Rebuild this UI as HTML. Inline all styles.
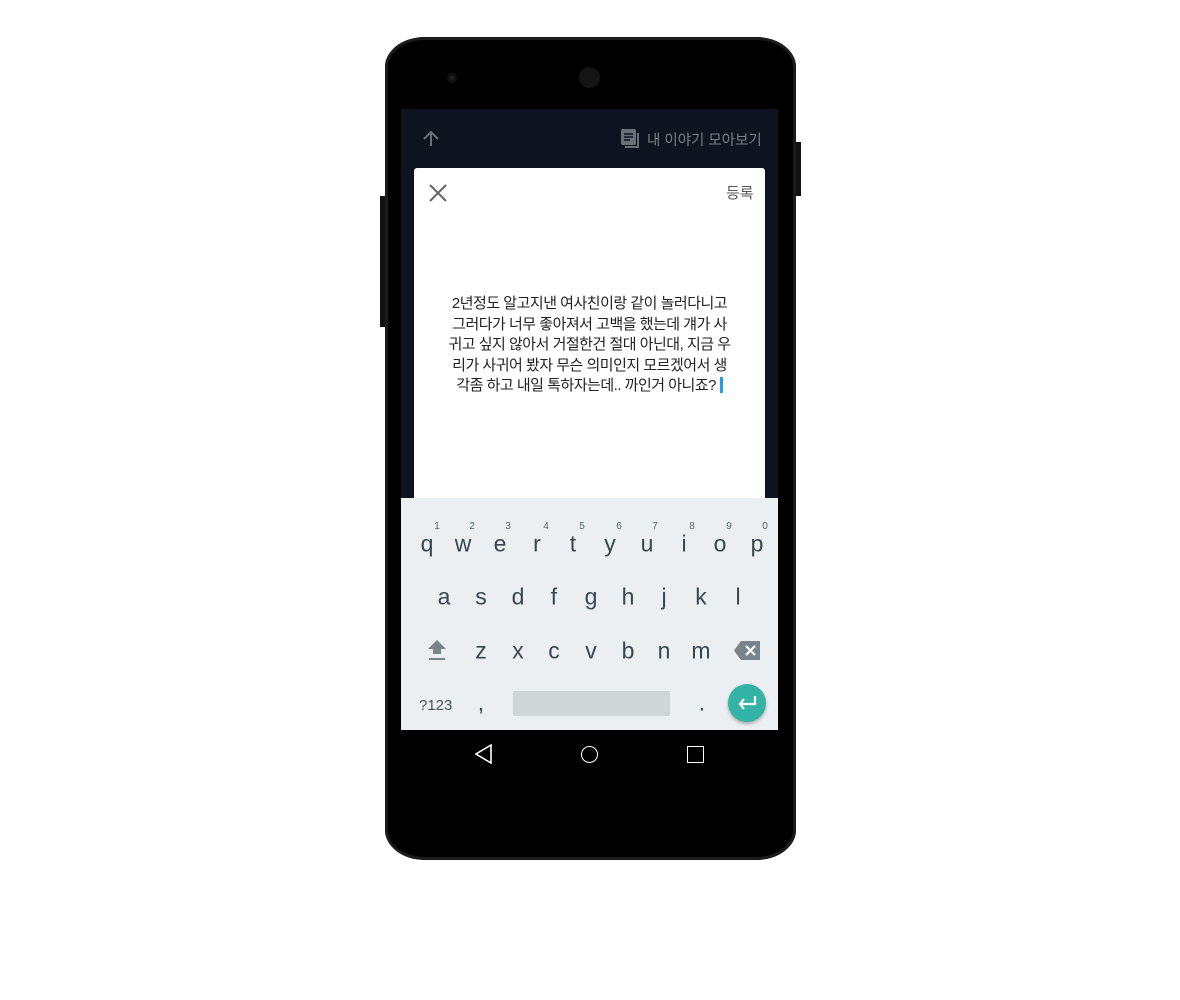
<!DOCTYPE html>
<html><head><meta charset="utf-8"><style>
body{margin:0;width:1180px;height:1000px;background:#fff;position:relative;overflow:hidden;font-family:"Liberation Sans","Noto Sans CJK KR",sans-serif}
.a{position:absolute}
.k{position:absolute;font-size:23px;color:#37474f;transform:translate(-50%,-50%);font-family:"Liberation Sans",sans-serif}
.n{position:absolute;font-size:10px;color:#55636b;transform:translateX(-50%)}
</style></head><body>
<div class="a" style="left:380px;top:196px;width:8px;height:131px;background:#111"></div>
<div class="a" style="left:793px;top:142px;width:8px;height:54px;background:#111"></div>
<div class="a" style="left:385px;top:37px;width:411px;height:823px;background:#000;border-radius:40px/30px;box-shadow:inset 0 0 0 3px #1c1c1c"></div>
<div class="a" style="left:447px;top:73px;width:10px;height:10px;border-radius:50%;background:#222;box-shadow:inset 0 0 0 3px #111"></div>
<div class="a" style="left:579px;top:67px;width:21px;height:21px;border-radius:50%;background:#151515"></div>
<div class="a" style="left:401px;top:109px;width:377px;height:621px;background:#0d1420"></div>
<svg class="a" style="left:420px;top:128px" width="22" height="22" viewBox="0 0 22 22"><path d="M11 18V4M4 11l7-7 7 7" stroke="#6b7078" stroke-width="2" fill="none"/></svg>
<svg class="a" style="left:620px;top:128px" width="22" height="22" viewBox="0 0 22 22"><rect x="1" y="1" width="15" height="16" rx="2" fill="#6b7078"/><path d="M4 6h9M4 9h9M4 12h6" stroke="#0d1420" stroke-width="1.6"/><path d="M18 5v14H5" stroke="#6b7078" stroke-width="2" fill="none"/></svg>
<div class="a" style="left:647px;top:129px;font-size:14.5px;color:#7a7f86">내 이야기 모아보기</div>
<div class="a" style="left:414px;top:168px;width:351px;height:340px;background:#fff;border-radius:3px 3px 0 0"></div>
<svg class="a" style="left:428px;top:183px" width="20" height="20" viewBox="0 0 20 20"><path d="M2 2l16 16M18 2L2 18" stroke="#666" stroke-width="2"/></svg>
<div class="a" style="left:726px;top:182px;font-size:15px;color:#555">등록</div>
<div class="a" style="left:414px;top:294px;width:351px;text-align:center;font-size:15px;letter-spacing:-0.5px;line-height:20.5px;color:#222;white-space:nowrap">2년정도 알고지낸 여사친이랑 같이 놀러다니고<br>그러다가 너무 좋아져서 고백을 했는데 걔가 사<br>귀고 싶지 않아서 거절한건 절대 아닌대, 지금 우<br>리가 사귀어 봤자 무슨 의미인지 모르겠어서 생<br>각좀 하고 내일 톡하자는데.. 까인거 아니죠? <span style="display:inline-block;width:3px;height:16px;background:#1ea0e8;vertical-align:-3px"></span></div>
<div class="a" style="left:401px;top:498px;width:377px;height:232px;background:#eceff1"></div>
<div class="n" style="left:437px;top:521px">1</div><div class="n" style="left:472px;top:521px">2</div><div class="n" style="left:508px;top:521px">3</div><div class="n" style="left:546px;top:521px">4</div><div class="n" style="left:582px;top:521px">5</div><div class="n" style="left:619px;top:521px">6</div><div class="n" style="left:655px;top:521px">7</div><div class="n" style="left:692px;top:521px">8</div><div class="n" style="left:729px;top:521px">9</div><div class="n" style="left:765px;top:521px">0</div>
<div class="k" style="left:427px;top:544px">q</div><div class="k" style="left:463px;top:544px">w</div><div class="k" style="left:500px;top:544px">e</div><div class="k" style="left:537px;top:544px">r</div><div class="k" style="left:573px;top:544px">t</div><div class="k" style="left:610px;top:544px">y</div><div class="k" style="left:647px;top:544px">u</div><div class="k" style="left:684px;top:544px">i</div><div class="k" style="left:720px;top:544px">o</div><div class="k" style="left:757px;top:544px">p</div>
<div class="k" style="left:444px;top:597px">a</div><div class="k" style="left:481px;top:597px">s</div><div class="k" style="left:518px;top:597px">d</div><div class="k" style="left:554px;top:597px">f</div><div class="k" style="left:591px;top:597px">g</div><div class="k" style="left:628px;top:597px">h</div><div class="k" style="left:664px;top:597px">j</div><div class="k" style="left:701px;top:597px">k</div><div class="k" style="left:738px;top:597px">l</div>
<svg class="a" style="left:427px;top:640px" width="20" height="21" viewBox="0 0 20 21"><path d="M10 0L19 9H14V14H6V9H1Z" fill="#78848a"/><rect x="2" y="18" width="16" height="2" fill="#78848a"/></svg>
<div class="k" style="left:481px;top:651px">z</div><div class="k" style="left:518px;top:651px">x</div><div class="k" style="left:554px;top:651px">c</div><div class="k" style="left:591px;top:651px">v</div><div class="k" style="left:628px;top:651px">b</div><div class="k" style="left:664px;top:651px">n</div><div class="k" style="left:701px;top:651px">m</div>
<svg class="a" style="left:734px;top:641px" width="26" height="19" viewBox="0 0 26 19"><path d="M7 0H26V19H7L0 9.5Z" fill="#78848a"/><path d="M12 5l9 9M21 5l-9 9" stroke="#fff" stroke-width="2.2"/></svg>
<div class="a" style="left:419px;top:697px;font-size:15px;color:#46545b">?123</div>
<div class="k" style="left:481px;top:703px">,</div>
<div class="a" style="left:513px;top:691px;width:157px;height:25px;background:#d0d5d8;border-radius:2px"></div>
<div class="k" style="left:702px;top:703px">.</div>
<div class="a" style="left:728px;top:684px;width:38px;height:38px;border-radius:50%;background:#33b3a6;box-shadow:0 2px 3px rgba(0,0,0,.3)"></div>
<svg class="a" style="left:737px;top:694px" width="20" height="18" viewBox="0 0 20 18"><path d="M18 2v8H3M7 5l-4 5 4 5" stroke="#fff" stroke-width="2.2" fill="none"/></svg>
<svg class="a" style="left:475px;top:744px" width="18" height="20" viewBox="0 0 18 20"><path d="M16 1L1 10l15 9Z" stroke="#fff" stroke-width="1.6" fill="none"/></svg>
<div class="a" style="left:581px;top:746px;width:15px;height:15px;border:1.6px solid #fff;border-radius:50%"></div>
<div class="a" style="left:687px;top:746px;width:15px;height:15px;border:1.6px solid #fff"></div>
</body></html>
